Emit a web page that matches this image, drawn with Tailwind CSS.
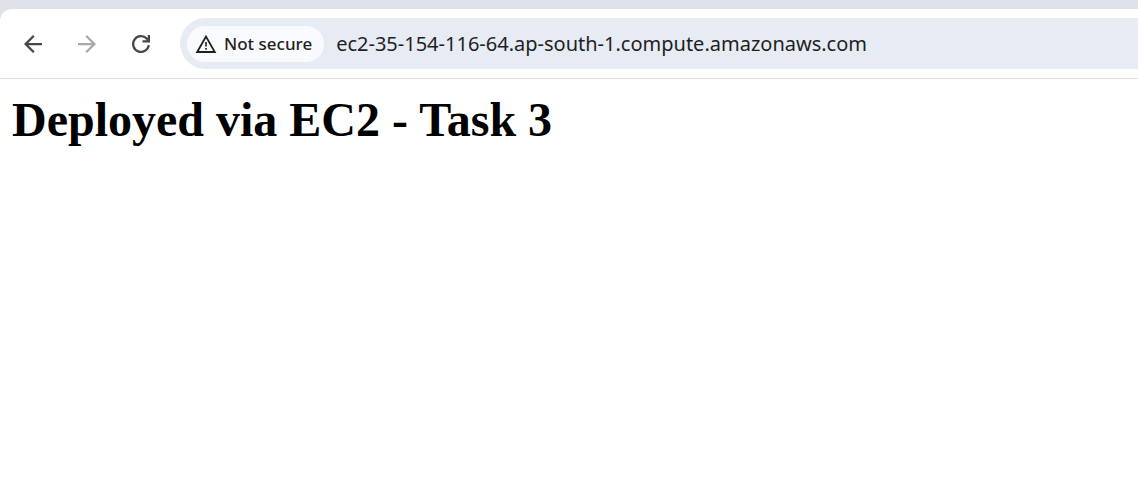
<!DOCTYPE html>
<html lang="en">
<head>
<meta charset="utf-8">
<meta name="viewport" content="width=device-width, initial-scale=1">
<title>Deployed via EC2 - Task 3</title>
<script src="https://cdn.jsdelivr.net/npm/@tailwindcss/browser@4"></script>
</head>
<body class="min-h-screen bg-white">
<header class="bg-[#dde2e9] pt-[9px] font-['Noto_Sans','Open_Sans',sans-serif]">
  <nav aria-label="Browser toolbar" class="flex items-center rounded-tl-xl border-b border-[#dfe0e2] bg-white py-[9px] pl-[18px]">
    <div class="flex items-center gap-6 text-[#474747]">
      <button type="button" aria-label="Back" class="size-[30px]">
        <svg class="size-full" viewBox="0 0 20 20" fill="currentColor" aria-hidden="true"><path d="M6.875 10.75 11.063 14.938 10 16 4 10 10 4 11.063 5.063 6.875 9.25H16v1.5Z"/></svg>
      </button>
      <button type="button" aria-label="Forward" disabled class="size-[30px] text-[#a9a9a9]">
        <svg class="size-full" viewBox="0 0 20 20" fill="currentColor" aria-hidden="true"><path d="M13.125 10.75 8.937 14.938 10 16 16 10 10 4 8.937 5.063 13.125 9.25H4v1.5Z"/></svg>
      </button>
      <button type="button" aria-label="Reload" class="size-[30px]">
        <svg class="size-full" viewBox="0 0 20 20" fill="none" stroke="currentColor" stroke-width="1.5" aria-hidden="true"><path d="M15.2 10.75A5.25 5.25 0 1 1 13.9 6.5L15.25 8M15.25 4v4.25H11"/><path d="M15.5 6.5V8.5H13.2Z" fill="currentColor" stroke="none"/></svg>
      </button>
    </div>
    <div class="ml-6 flex h-[51px] min-w-0 flex-1 items-center gap-3 rounded-l-full bg-[#e6ebf4] pl-[7px]">
      <button type="button" class="flex h-9 shrink-0 items-center gap-[7px] rounded-full bg-[#f9fafd] pr-3 pl-2 text-[17px] font-medium text-[#1f1f1f]">
        <svg class="size-[22px]" viewBox="0 0 22 22" fill="none" stroke="currentColor" aria-hidden="true"><path stroke-width="1.8" d="M2.2 19 11 3.6 19.8 19Z"/><path stroke-width="1.6" d="M11 9v4.5M11 15v1.8"/></svg>
        Not secure
      </button>
      <input type="text" aria-label="Address" value="ec2-35-154-116-64.ap-south-1.compute.amazonaws.com" class="min-w-0 flex-1 bg-transparent text-[20px] text-[#1f1f1f] outline-none">
    </div>
  </nav>
</header>
<main class="px-3 py-[13px]">
  <h1 class="font-['Liberation_Serif',serif] text-5xl/[56px] font-bold text-black">Deployed via EC2 - Task 3</h1>
</main>
</body>
</html>
